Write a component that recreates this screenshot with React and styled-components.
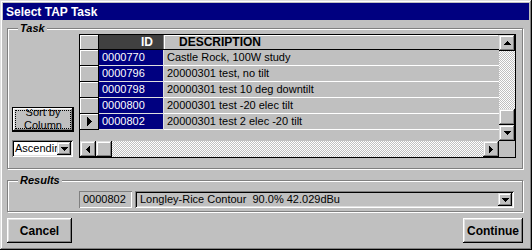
import styled, { createGlobalStyle } from "styled-components";

const GlobalStyle = createGlobalStyle`
    html, body {
        margin: 0;
        padding: 0;
        background: #c0c0c0;
    }
    * {
        box-sizing: border-box;
    }
`;

const raised = `
    box-shadow: inset -1px -1px #000, inset 1px 1px #dfdfdf,
        inset -2px -2px #808080, inset 2px 2px #fff;
`;

const buttonRaised = `
    box-shadow: inset -1px -1px #000, inset 1px 1px #fff,
        inset -2px -2px #808080, inset 2px 2px #dfdfdf;
`;

const dither = `
    background-color: #c0c0c0;
    background-image: conic-gradient(#fff 0 25%, transparent 0 50%, #fff 0 75%, transparent 0);
    background-size: 2px 2px;
`;

const Window = styled.div`
    width: 532px;
    height: 250px;
    padding: 3px;
    background: #c0c0c0;
    ${raised}
    display: flex;
    flex-direction: column;
    font-family: "Liberation Sans", Arial, sans-serif;
    font-size: 11px;
    color: #000;
`;

const TitleBar = styled.div`
    height: 17px;
    background: #000080;
    color: #fff;
    font-size: 12px;
    font-weight: 700;
    display: flex;
    align-items: center;
    padding-left: 3px;
`;

const Body = styled.div`
    flex: 1;
    display: flex;
    flex-direction: column;
    padding: 3px 6px 4px 4px;
`;

const Group = styled.fieldset`
    margin: 0 0 6px;
    padding: ${(p) => p.$pad};
    min-width: 0;
    border: 1px solid #808080;
    box-shadow: inset 1px 1px #fff, 1px 1px #fff;
`;

const Legend = styled.legend`
    margin-left: 6px;
    padding: 0 2px;
    background: #c0c0c0;
    font-size: 11px;
    line-height: 11px;
    font-weight: 700;
    font-style: italic;
`;

const TaskRow = styled.div`
    display: flex;
    align-items: flex-end;
    gap: 5px;
`;

const SideColumn = styled.div`
    width: 62px;
    display: flex;
    flex-direction: column;
    gap: 8px;
    padding-bottom: 1px;
`;

const SortButton = styled.button`
    width: 62px;
    height: 25px;
    padding: 0;
    border: 1px solid #000;
    background: #c0c0c0;
    ${buttonRaised}
    display: grid;
    font-family: inherit;
    font-size: 11px;
    color: #000;
    overflow: hidden;
`;

const FocusRect = styled.span`
    grid-area: 1 / 1;
    margin: 2px;
    border: 1px dotted #000;
`;

const SortLabel = styled.span`
    grid-area: 1 / 1;
    margin: 1px 2px 2px;
    display: flex;
    flex-direction: column;
    justify-content: center;
    align-items: center;
    line-height: 13px;
    overflow: hidden;
`;

const Combo = styled.div`
    width: ${(p) => (p.$width ? `${p.$width}px` : "auto")};
    flex: ${(p) => (p.$width ? "none" : 1)};
    height: 17px;
    padding: 2px;
    display: flex;
    background: ${(p) => p.$bg || "#c0c0c0"};
    box-shadow: inset 1px 1px #808080, inset -1px -1px #fff,
        inset 2px 2px #000, inset -2px -2px #dfdfdf;
`;

const ComboText = styled.span`
    flex: 1;
    padding-left: ${(p) => p.$indent || 1}px;
    line-height: 13px;
    white-space: pre;
    overflow: hidden;
`;

const DropButton = styled.span`
    width: 14px;
    height: 13px;
    background: #c0c0c0;
    ${raised}
    display: flex;
    align-items: center;
    justify-content: center;
`;

const DataGrid = styled.div`
    width: 437px;
    height: 124px;
    border: 1px solid #000;
    background: #c0c0c0;
    display: grid;
    grid-template-columns: 1fr 16px;
    grid-template-rows: 1fr 16px;
`;

const Sheet = styled.div`
    display: flex;
    flex-direction: column;
    overflow: hidden;
`;

const HeaderRow = styled.div`
    display: grid;
    grid-template-columns: 19px 65px 1fr;
    height: 15px;
    border-bottom: 1px solid #000;
    font-size: 12px;
    font-weight: 700;
    line-height: 14px;
`;

const HeadCell = styled.div`
    background: ${(p) => (p.$active ? "#404040" : "#c0c0c0")};
    color: ${(p) => (p.$active ? "#fff" : "#000")};
    text-align: ${(p) => p.$align || "left"};
    padding: ${(p) => p.$pad || 0};
    border-right: 1px solid ${(p) => p.$line || "#808080"};
    box-shadow: ${(p) => (p.$active ? "none" : "inset 1px 1px #fff")};
    white-space: nowrap;
    overflow: hidden;
`;

const DataRow = styled.div`
    display: grid;
    grid-template-columns: 19px 65px 1fr;
    height: 16px;
    line-height: 15px;
`;

const Selector = styled.div`
    border-right: 1px solid #000;
    border-bottom: 1px solid #000;
    box-shadow: inset 1px 1px #fff;
    display: flex;
    align-items: center;
    justify-content: center;
`;

const IdCell = styled.div`
    background: #000080;
    color: #fff;
    padding-left: 3px;
    border-right: 1px solid #dfdfdf;
    border-bottom: 1px solid #dfdfdf;
`;

const DescCell = styled.div`
    padding-left: 3px;
    border-bottom: 1px solid #fff;
    white-space: nowrap;
    overflow: hidden;
`;

const ScrollBar = styled.div`
    display: flex;
    flex-direction: ${(p) => (p.$vertical ? "column" : "row")};
    ${dither}
`;

const ScrollButton = styled.div`
    flex: none;
    width: 16px;
    height: 16px;
    background: #c0c0c0;
    ${raised}
    display: flex;
    align-items: center;
    justify-content: center;
`;

const Track = styled.div`
    flex: 1;
`;

const Corner = styled.div`
    background: #c0c0c0;
`;

const ResultsRow = styled.div`
    display: flex;
    gap: 3px;
    padding-left: 67px;
`;

const IdField = styled.div`
    width: 53px;
    height: 17px;
    padding-left: 4px;
    line-height: 17px;
    box-shadow: inset 1px 1px #808080, inset -1px -1px #fff;
`;

const ButtonRow = styled.div`
    display: flex;
    justify-content: space-between;
`;

const PushButton = styled.button`
    width: ${(p) => p.$width}px;
    height: 25px;
    padding: 0;
    border: none;
    background: #c0c0c0;
    ${buttonRaised}
    font-family: inherit;
    font-size: 12px;
    font-weight: 700;
    color: #000;
`;

const arrows = {
    up: { w: 7, h: 4, d: "M3 0h1v1h1v1h1v1h1v1H0V3h1V2h1V1h1z" },
    down: { w: 7, h: 4, d: "M0 0h7v1H6v1H5v1H4v1H3V3H2V2H1V1H0z" },
    left: { w: 4, h: 7, d: "M3 0h1v7H3V6H2V5H1V4H0V3h1V2h1V1h1z" },
    right: { w: 4, h: 7, d: "M0 0h1v1h1v1h1v1h1v1H3v1H2v1H1v1H0z" },
    record: { w: 5, h: 9, d: "M0 0h1v1h1v1h1v1h1v1h1v1H4v1H3v1H2v1H1v1H0z" },
};

function Arrow({ dir }) {
    const a = arrows[dir];
    return (
        <svg width={a.w} height={a.h} viewBox={`0 0 ${a.w} ${a.h}`} shapeRendering="crispEdges">
            <path d={a.d} fill="#000" />
        </svg>
    );
}

const tasks = [
    { id: "0000770", desc: "Castle Rock, 100W study" },
    { id: "0000796", desc: "20000301 test, no tilt" },
    { id: "0000798", desc: "20000301 test 10 deg downtilt" },
    { id: "0000800", desc: "20000301 test -20 elec tilt" },
    { id: "0000802", desc: "20000301 test 2 elec -20 tilt", current: true },
];

function App() {
    return (
        <>
            <GlobalStyle />
            <Window>
                <TitleBar>Select TAP Task</TitleBar>
                <Body>
                    <Group $pad="0 6px 10px 4px">
                        <Legend>Task</Legend>
                        <TaskRow>
                            <SideColumn>
                                <SortButton>
                                    <FocusRect />
                                    <SortLabel>
                                        <span>Sort by</span>
                                        <span>Column</span>
                                    </SortLabel>
                                </SortButton>
                                <Combo $width={61} $bg="#fff">
                                    <ComboText>Ascending</ComboText>
                                    <DropButton>
                                        <Arrow dir="down" />
                                    </DropButton>
                                </Combo>
                            </SideColumn>
                            <DataGrid>
                                <Sheet>
                                    <HeaderRow>
                                        <HeadCell $line="#000" />
                                        <HeadCell $active $align="right" $pad="0 10px 0 0" $line="#808080">
                                            ID
                                        </HeadCell>
                                        <HeadCell $pad="0 0 0 15px" $line="transparent">
                                            DESCRIPTION
                                        </HeadCell>
                                    </HeaderRow>
                                    {tasks.map((task) => (
                                        <DataRow key={task.id}>
                                            <Selector>{task.current && <Arrow dir="record" />}</Selector>
                                            <IdCell>{task.id}</IdCell>
                                            <DescCell>{task.desc}</DescCell>
                                        </DataRow>
                                    ))}
                                </Sheet>
                                <ScrollBar $vertical>
                                    <ScrollButton>
                                        <Arrow dir="up" />
                                    </ScrollButton>
                                    <Track />
                                    <ScrollButton />
                                    <ScrollButton>
                                        <Arrow dir="down" />
                                    </ScrollButton>
                                </ScrollBar>
                                <ScrollBar>
                                    <ScrollButton>
                                        <Arrow dir="left" />
                                    </ScrollButton>
                                    <ScrollButton />
                                    <Track />
                                    <ScrollButton>
                                        <Arrow dir="right" />
                                    </ScrollButton>
                                </ScrollBar>
                                <Corner />
                            </DataGrid>
                        </TaskRow>
                    </Group>
                    <Group $pad="5px 8px 3px 4px">
                        <Legend>Results</Legend>
                        <ResultsRow>
                            <IdField>0000802</IdField>
                            <Combo>
                                <ComboText $indent={3}>Longley-Rice Contour  90.0% 42.029dBu</ComboText>
                                <DropButton>
                                    <Arrow dir="down" />
                                </DropButton>
                            </Combo>
                        </ResultsRow>
                    </Group>
                    <ButtonRow>
                        <PushButton $width={65}>Cancel</PushButton>
                        <PushButton $width={60}>Continue</PushButton>
                    </ButtonRow>
                </Body>
            </Window>
        </>
    );
}

export default App;
